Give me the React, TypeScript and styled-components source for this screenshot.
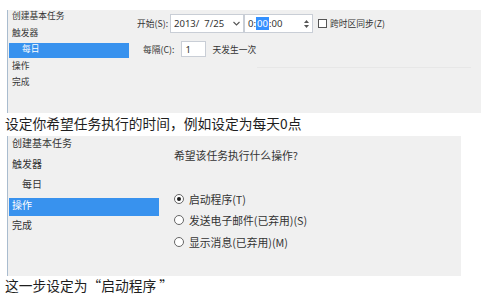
import React from 'react';
import styled, { createGlobalStyle } from 'styled-components';

const GlobalStyle = createGlobalStyle`
    html, body {
        margin: 0;
        padding: 0;
        background: #ffffff;
    }
    body {
        font-family: "Noto Sans CJK SC", "Noto Sans", sans-serif;
        color: #222;
    }
`;

const Page = styled.div`
    width: 499px;
    height: 295px;
    overflow: hidden;
    display: flex;
    flex-direction: column;
`;

const Shot = styled.div`
    display: flex;
    margin-left: 7px;
    margin-top: ${(props: { $top: number; $width: number; $height: number }) => props.$top}px;
    width: ${(props) => props.$width}px;
    height: ${(props) => props.$height}px;
    border-left: 1px solid #a9bccf;
    background: #f0f0f0;
    box-sizing: border-box;
    flex-shrink: 0;
`;

const Nav = styled.div`
    display: grid;
    grid-auto-rows: ${(props: { $width: number; $row: number; $size: number }) => props.$row}px;
    align-content: start;
    width: ${(props) => props.$width}px;
    padding-left: 1px;
    box-sizing: border-box;
    font-size: ${(props) => props.$size}px;
    flex-shrink: 0;
`;

const NavItem = styled.div`
    height: ${(props: { $selected?: boolean; $indent?: boolean; $bar: number; $line: number }) => props.$bar}px;
    line-height: ${(props) => props.$line}px;
    padding-left: ${(props) => (props.$indent ? 13 : 3)}px;
    background: ${(props) => (props.$selected ? '#3892ee' : 'transparent')};
    color: ${(props) => (props.$selected ? '#ffffff' : '#333333')};
    white-space: nowrap;
`;

const Caption = styled.div`
    height: ${(props: { $height: number; $line: number }) => props.$height}px;
    line-height: ${(props) => props.$line}px;
    padding-left: 5px;
    font-size: 13.75px;
    color: #1e1e1e;
    white-space: nowrap;
    flex-shrink: 0;
`;

/* first screenshot: trigger time */

const TriggerPane = styled.div`
    display: flex;
    flex-direction: column;
    gap: 8px;
    flex: 1;
    padding: 4px 0 0 8px;
    font-size: 8.75px;
    color: #333;
`;

const FieldRow = styled.div`
    display: flex;
    align-items: center;
    height: ${(props: { $height: number; $indent?: number }) => props.$height}px;
    margin-left: ${(props) => props.$indent || 0}px;
`;

const Label = styled.span`
    white-space: nowrap;
    margin-right: ${(props: { $gap?: number; $lead?: number }) => props.$gap || 0}px;
    margin-left: ${(props) => props.$lead || 0}px;
`;

const Box = styled.div`
    display: flex;
    align-items: center;
    width: ${(props: { $width: number }) => props.$width}px;
    height: 100%;
    padding: 0 3px;
    box-sizing: border-box;
    background: #ffffff;
    border: 1px solid #c9ced6;
    font-family: "Noto Sans", "Noto Sans CJK SC", sans-serif;
    font-size: 9.5px;
    color: #333;
`;

const Grow = styled.span`
    flex: 1;
    white-space: pre;
`;

const Highlight = styled.span`
    background: #3390ff;
    color: #ffffff;
    padding: 0 1px;
`;

const Spinner = styled.div`
    display: flex;
    flex-direction: column;
    gap: 2px;
`;

const Check = styled.span`
    width: 9px;
    height: 9px;
    margin: 0 3px 0 5px;
    border: 1px solid #555;
    background: #fff;
    box-sizing: border-box;
`;

const Divider = styled.div`
    height: 1px;
    margin: 2px 10px 0 120px;
    background: #e7e7e7;
`;

/* second screenshot: action */

const ActionPane = styled.div`
    flex: 1;
    padding: 12px 0 0 15px;
    font-size: 10.8px;
    color: #333;
`;

const Question = styled.div`
    line-height: 14px;
    white-space: nowrap;
`;

const RadioList = styled.div`
    display: grid;
    grid-auto-rows: 21.5px;
    margin-top: 26px;
`;

const RadioRow = styled.label`
    display: flex;
    align-items: center;
    gap: 5px;
    white-space: nowrap;
`;

const RadioDot = styled.span`
    display: flex;
    align-items: center;
    justify-content: center;
    width: 10px;
    height: 10px;
    border-radius: 50%;
    border: 1px solid #666;
    background: #fff;
    box-sizing: border-box;

    &::after {
        content: '';
        width: 4px;
        height: 4px;
        border-radius: 50%;
        background: ${(props: { $checked?: boolean }) => (props.$checked ? '#1a1a1a' : 'transparent')};
    }
`;

const steps = ['创建基本任务', '触发器', '每日', '操作', '完成'];

const radios = [
    { label: '启动程序(T)', checked: true },
    { label: '发送电子邮件(已弃用)(S)', checked: false },
    { label: '显示消息(已弃用)(M)', checked: false },
];

const Chevron = () => (
    <svg width="7" height="5" viewBox="0 0 7 5">
        <path d="M0.5 1 L3.5 4 L6.5 1" fill="none" stroke="#555" strokeWidth="1.1" />
    </svg>
);

const Arrow = ({ up }: { up: boolean }) => (
    <svg width="5" height="3" viewBox="0 0 5 3">
        <path d={up ? 'M0 3 L2.5 0 L5 3 Z' : 'M0 0 L2.5 3 L5 0 Z'} fill="#555" />
    </svg>
);

export default function App() {
    return (
        <Page>
            <GlobalStyle />
            <Shot $top={10} $width={474} $height={103}>
                <Nav $width={121} $row={16.6} $size={8.75}>
                    {steps.map((step, i) => (
                        <NavItem key={step} $selected={i === 2} $indent={i === 2} $bar={15} $line={12.5}>
                            {step}
                        </NavItem>
                    ))}
                </Nav>
                <TriggerPane>
                    <FieldRow $height={19}>
                        <Label $gap={2}>开始(S):</Label>
                        <Box $width={74}>
                            <Grow>2013/  7/25</Grow>
                            <Chevron />
                        </Box>
                        <Box $width={69}>
                            <Grow>
                                0:<Highlight>00</Highlight>:00
                            </Grow>
                            <Spinner>
                                <Arrow up />
                                <Arrow up={false} />
                            </Spinner>
                        </Box>
                        <Check />
                        <Label>跨时区同步(Z)</Label>
                    </FieldRow>
                    <FieldRow $height={16} $indent={6}>
                        <Label $gap={7}>每隔(C):</Label>
                        <Box $width={25}>1</Box>
                        <Label $lead={6}>天发生一次</Label>
                    </FieldRow>
                    <Divider />
                </TriggerPane>
            </Shot>
            <Caption $height={23} $line={20}>
                设定你希望任务执行的时间，例如设定为每天0点
            </Caption>
            <Shot $top={0} $width={454} $height={140}>
                <Nav $width={151} $row={20.5} $size={10}>
                    {steps.map((step, i) => (
                        <NavItem key={step} $selected={i === 3} $indent={i === 2} $bar={18} $line={14}>
                            {step}
                        </NavItem>
                    ))}
                </Nav>
                <ActionPane>
                    <Question>希望该任务执行什么操作?</Question>
                    <RadioList>
                        {radios.map((r) => (
                            <RadioRow key={r.label}>
                                <RadioDot $checked={r.checked} />
                                {r.label}
                            </RadioRow>
                        ))}
                    </RadioList>
                </ActionPane>
            </Shot>
            <Caption $height={19} $line={19}>
                这一步设定为“启动程序 ”
            </Caption>
        </Page>
    );
}
